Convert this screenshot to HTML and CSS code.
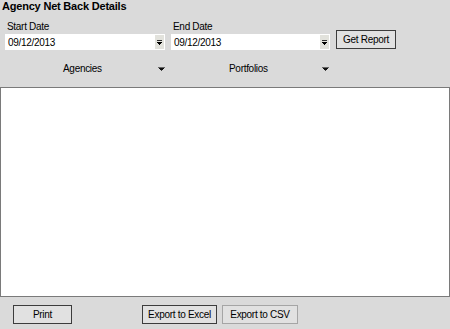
FILE: index.html
```html
<!DOCTYPE html>
<html lang="en">
<head>
  <meta charset="UTF-8" />
  <title>Agency Net Back Details</title>
  <link rel="stylesheet" href="styles.css">
</head>
<body>
  <h1 class="title">Agency Net Back Details</h1>

  <div class="date-row">
    <div class="field field-start">
      <label>Start Date</label>
      <div class="date-box">
        <span>09/12/2013</span>
        <span class="drop-btn">
          <svg width="5" height="5" viewBox="0 0 5 5"><rect x="0" y="0" width="5" height="1" fill="#333"/><rect x="0" y="2" width="5" height="1"/><rect x="1" y="3" width="3" height="1"/><rect x="2" y="4" width="1" height="1"/></svg>
        </span>
      </div>
    </div>
    <div class="field field-end">
      <label>End Date</label>
      <div class="date-box">
        <span>09/12/2013</span>
        <span class="drop-btn">
          <svg width="5" height="5" viewBox="0 0 5 5"><rect x="0" y="0" width="5" height="1" fill="#333"/><rect x="0" y="2" width="5" height="1"/><rect x="1" y="3" width="3" height="1"/><rect x="2" y="4" width="1" height="1"/></svg>
        </span>
      </div>
    </div>
    <button class="btn btn-report">Get Report</button>
  </div>

  <div class="filter-row">
    <div class="filter filter-agencies">
      <span>Agencies</span>
      <svg class="arrow" width="7" height="4" viewBox="0 0 7 4"><rect x="0" y="0" width="7" height="1" fill="#666"/><rect x="1" y="1" width="5" height="1" fill="#111"/><rect x="2" y="2" width="3" height="1" fill="#111"/><rect x="3" y="3" width="1" height="1" fill="#444"/></svg>
    </div>
    <div class="filter filter-portfolios">
      <span>Portfolios</span>
      <svg class="arrow" width="7" height="4" viewBox="0 0 7 4"><rect x="0" y="0" width="7" height="1" fill="#666"/><rect x="1" y="1" width="5" height="1" fill="#111"/><rect x="2" y="2" width="3" height="1" fill="#111"/><rect x="3" y="3" width="1" height="1" fill="#444"/></svg>
    </div>
  </div>

  <div class="report-area"></div>

  <div class="action-row">
    <button class="btn btn-print">Print</button>
    <button class="btn btn-excel">Export to Excel</button>
    <button class="btn btn-csv">Export to CSV</button>
  </div>
</body>
</html>
```

FILE: styles.css
```css
body {
  margin: 0;
  width: 450px;
  height: 329px;
  background: #dadada;
  color: #000;
  font-family: "Liberation Sans", Arial, sans-serif;
  font-size: 10px;
  letter-spacing: -0.3px;
  overflow: hidden;
}

.title {
  margin: 0;
  padding: 0 0 0 2px;
  height: 16px;
  font-size: 11px;
  line-height: 13px;
  font-weight: bold;
  letter-spacing: -0.2px;
}

/* date pickers + report button */
.date-row {
  display: flex;
  align-items: flex-end;
  padding-left: 5px;
  height: 34px;
}

.field {
  display: flex;
  flex-direction: column;
}

.field label {
  padding-left: 2px;
  height: 14px;
  line-height: 14px;
}

.field-start {
  width: 160px;
}

.field-end {
  width: 159px;
  margin-left: 6px;
}

.date-box {
  display: flex;
  align-items: center;
  justify-content: space-between;
  height: 16px;
  background: #fff;
  padding-left: 3px;
  padding-right: 1px;
}

.drop-btn {
  display: flex;
  align-items: center;
  justify-content: center;
  width: 9px;
  height: 14px;
  background: #e2e2dc;
}

.drop-btn svg {
  display: block;
}

.btn {
  font-family: "Liberation Sans", Arial, sans-serif;
  font-size: 10px;
  letter-spacing: -0.3px;
  color: #000;
  background: #e1e1e1;
  border: 1px solid #3c3c3c;
  padding: 0;
  margin: 0;
  height: 19px;
}

.btn-report {
  width: 60px;
  margin-left: 6px;
  margin-bottom: 1px;
}

/* agencies / portfolios dropdowns */
.filter-row {
  display: flex;
  padding-left: 5px;
  margin-top: 9px;
  height: 19px;
}

.filter {
  display: flex;
  align-items: center;
  justify-content: space-between;
  padding-right: 2px;
}

.filter .arrow {
  display: block;
  margin-top: 1px;
}

.filter-agencies {
  width: 102px;
  padding-left: 58px;
}

.filter-portfolios {
  width: 100px;
  padding-left: 56px;
  margin-left: 6px;
}

.report-area {
  margin-top: 9px;
  height: 208px;
  background: #fff;
  border: 1px solid #7a7a7a;
}

.action-row {
  display: flex;
  margin-top: 8px;
  padding-left: 13px;
}

.btn-print {
  width: 59px;
}

.btn-excel {
  width: 75px;
  margin-left: 70px;
}

.btn-csv {
  width: 76px;
  margin-left: 5px;
  border-color: #a5a5a5;
}
```
